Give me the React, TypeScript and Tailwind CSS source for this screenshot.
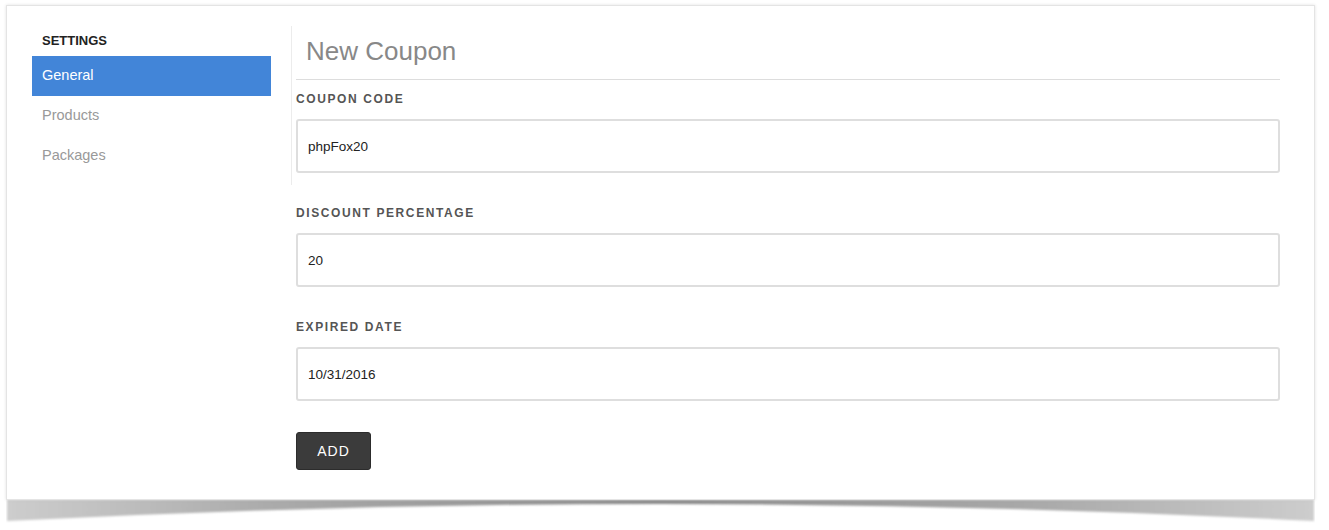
import { useState } from "react"

// Settings > New Coupon form
const navItems = ["General", "Products", "Packages"]

const Field = ({ label, value }: { label: string; value: string }) => {
    const [text, setText] = useState(value)
    return (
        <div className="mb-[32px]">
            <div className="mb-[12px] text-[12px] font-bold uppercase leading-4 tracking-[1.6px] text-[#555]">
                {label}
            </div>
            <input
                value={text}
                onChange={(e) => setText(e.target.value)}
                className="block h-[54px] w-full rounded-[3px] border-2 border-[#dedede] bg-white px-[10px] text-[13.5px] text-[#222] outline-none"
            />
        </div>
    )
}

const BottomShadow = () => (
    <svg width="1309" height="26" viewBox="0 0 1309 26" className="block">
        <defs>
            <linearGradient id="sh-h" x1="0" y1="0" x2="1" y2="0">
                <stop offset="0" stopColor="#cdcdcd" />
                <stop offset="0.2" stopColor="#ababab" />
                <stop offset="0.5" stopColor="#8a8a8a" />
                <stop offset="0.8" stopColor="#ababab" />
                <stop offset="1" stopColor="#cdcdcd" />
            </linearGradient>
            <filter id="sh-blur" x="-2%" y="-50%" width="104%" height="200%">
                <feGaussianBlur stdDeviation="1" />
            </filter>
        </defs>
        <path d="M1 0 H1308 V21 Q654.5 -13 1 21 Z" fill="url(#sh-h)" filter="url(#sh-blur)" />
    </svg>
)

export default function App() {
    const [active, setActive] = useState("General")

    return (
        <div
            className="min-h-screen bg-white pl-[6px] pt-[5px]"
            style={{ fontFamily: '"Liberation Sans", Arial, Helvetica, sans-serif' }}
        >
            <div className="w-[1309px]">
                <div className="relative z-10 flex items-start border border-[#e4e4e4] bg-white pb-[29px] pl-[25px] pr-[34px] pt-[20px] shadow-[0_0_3px_rgba(0,0,0,0.12)]">
                    {/* Sidebar */}
                    <div className="w-[260px] shrink-0 border-r border-[#ececec] pb-[9px] pr-[20px] pt-[7px]">
                        <div className="mb-[7px] pl-[10px] text-[13px] font-bold leading-4 text-[#222]">SETTINGS</div>
                        {navItems.map((item) => (
                            <button
                                key={item}
                                onClick={() => setActive(item)}
                                className={`flex h-10 w-full items-center pl-[10px] text-left text-[14.5px] ${
                                    active === item ? "bg-[#4285d8] text-white" : "text-[#999]"
                                }`}
                            >
                                {item}
                            </button>
                        ))}
                    </div>

                    {/* Main */}
                    <div className="ml-[4px] flex-1">
                        <h1 className="mb-[12px] mt-[9px] pl-[10px] text-[26px] leading-[32px] text-[#888]">New Coupon</h1>
                        <div className="mb-[11px] h-px bg-[#dddddd]" />

                        <Field label="Coupon Code" value="phpFox20" />
                        <Field label="Discount Percentage" value="20" />
                        <Field label="Expired Date" value="10/31/2016" />

                        <button className="-mt-[1px] h-[38px] w-[75px] rounded-[3px] border border-[#2c2c2c] bg-[#3b3b3b] text-[14px] tracking-[1px] text-white">
                            ADD
                        </button>
                    </div>
                </div>
                <BottomShadow />
            </div>
        </div>
    )
}
